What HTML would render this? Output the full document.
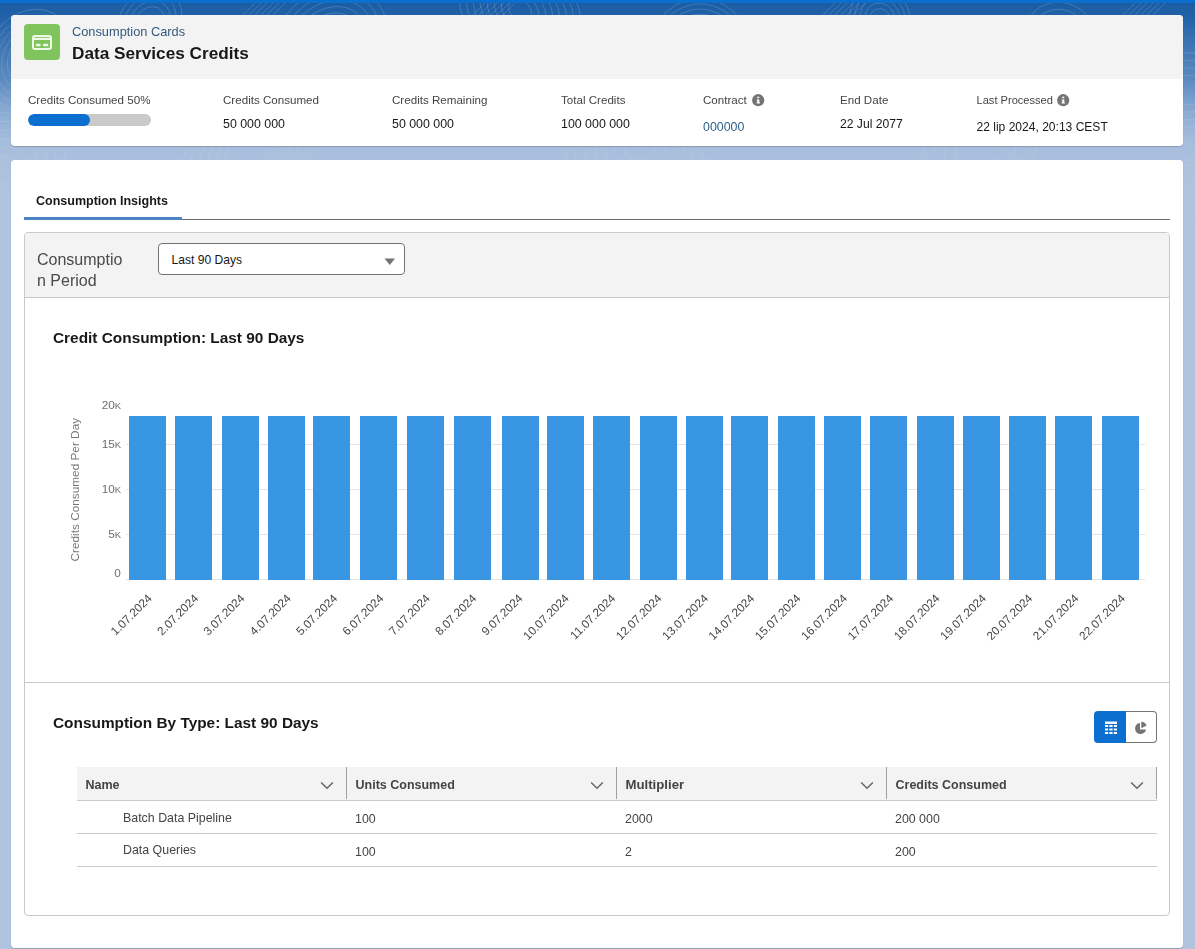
<!DOCTYPE html>
<html>
<head>
<meta charset="utf-8">
<style>
html,body{margin:0;padding:0;}
body{width:1195px;height:949px;overflow:hidden;position:relative;font-family:"Liberation Sans",sans-serif;
background:linear-gradient(180deg,#0b6fd0 0px,#0b6fd0 3px,#1c5ca3 3px,#2363a9 20px,#3a72b0 40px,#4a7eb8 60px,#5c8ac0 80px,#7a9fcc 100px,#93b1d6 120px,#a5bcdc 140px,#adc1de 165px,#b0c4df 200px,#b0c4df 949px);}
.abs{position:absolute;white-space:nowrap;line-height:1;}
.card{position:absolute;background:#fff;border-radius:4px;box-shadow:0 1px 1px rgba(0,0,0,.18);}
.lbl{font-size:11.6px;color:#444;}
.val{font-size:12.4px;color:#181818;}
.info{position:absolute;width:13px;height:13px;border-radius:50%;background:#747474;}
.info:before{content:"";position:absolute;left:5.5px;top:2.6px;width:2px;height:2px;background:#fff;border-radius:1px;}
.info:after{content:"";position:absolute;left:5.5px;top:5.5px;width:2px;height:5px;background:#fff;}
.th{position:absolute;top:767px;height:34px;background:#f3f3f3;border-bottom:1px solid #c9c9c9;box-sizing:border-box;}
.thtxt{font-size:12.5px;font-weight:700;color:#444;}
.td{font-size:12.4px;color:#444;}
</style>
</head>
<body>
<svg id="bgsvg" style="position:absolute;left:0;top:0" width="1195" height="949"><defs><linearGradient id="bgf" x1="0" y1="0" x2="0" y2="1"><stop offset="0" stop-color="#fff" stop-opacity="1"/><stop offset="0.5" stop-color="#fff" stop-opacity="0.6"/><stop offset="1" stop-color="#fff" stop-opacity="0"/></linearGradient><mask id="bgm"><rect x="0" y="3" width="1195" height="260" fill="url(#bgf)"/></mask></defs><g mask="url(#bgm)" fill="none" stroke="#ffffff" stroke-opacity="0.2" stroke-width="0.8"><ellipse cx="30" cy="60" rx="16.2" ry="19.4" transform="rotate(26 30 60)"/><ellipse cx="30" cy="60" rx="21.8" ry="26.0" transform="rotate(26 30 60)"/><ellipse cx="30" cy="60" rx="27.3" ry="32.5" transform="rotate(26 30 60)"/><ellipse cx="30" cy="60" rx="32.8" ry="39.1" transform="rotate(26 30 60)"/><ellipse cx="30" cy="60" rx="38.3" ry="45.7" transform="rotate(26 30 60)"/><ellipse cx="30" cy="60" rx="43.8" ry="52.3" transform="rotate(26 30 60)"/><ellipse cx="150" cy="20" rx="14.9" ry="12.4" transform="rotate(-37 150 20)"/><ellipse cx="150" cy="20" rx="21.2" ry="17.6" transform="rotate(-37 150 20)"/><ellipse cx="150" cy="20" rx="27.6" ry="22.9" transform="rotate(-37 150 20)"/><ellipse cx="150" cy="20" rx="33.9" ry="28.1" transform="rotate(-37 150 20)"/><ellipse cx="330" cy="40" rx="16.2" ry="13.0" transform="rotate(-35 330 40)"/><ellipse cx="330" cy="40" rx="23.6" ry="19.0" transform="rotate(-35 330 40)"/><ellipse cx="330" cy="40" rx="31.0" ry="24.9" transform="rotate(-35 330 40)"/><ellipse cx="330" cy="40" rx="38.3" ry="30.9" transform="rotate(-35 330 40)"/><ellipse cx="330" cy="40" rx="45.7" ry="36.9" transform="rotate(-35 330 40)"/><ellipse cx="330" cy="40" rx="53.1" ry="42.8" transform="rotate(-35 330 40)"/><ellipse cx="330" cy="40" rx="60.5" ry="48.8" transform="rotate(-35 330 40)"/><ellipse cx="520" cy="10" rx="12.3" ry="9.5" transform="rotate(36 520 10)"/><ellipse cx="520" cy="10" rx="20.0" ry="15.4" transform="rotate(36 520 10)"/><ellipse cx="520" cy="10" rx="27.7" ry="21.3" transform="rotate(36 520 10)"/><ellipse cx="520" cy="10" rx="35.4" ry="27.2" transform="rotate(36 520 10)"/><ellipse cx="520" cy="10" rx="43.0" ry="33.1" transform="rotate(36 520 10)"/><ellipse cx="520" cy="10" rx="50.7" ry="39.0" transform="rotate(36 520 10)"/><ellipse cx="520" cy="10" rx="58.4" ry="44.8" transform="rotate(36 520 10)"/><ellipse cx="520" cy="10" rx="66.1" ry="50.7" transform="rotate(36 520 10)"/><ellipse cx="700" cy="50" rx="14.7" ry="15.0" transform="rotate(5 700 50)"/><ellipse cx="700" cy="50" rx="19.8" ry="20.2" transform="rotate(5 700 50)"/><ellipse cx="700" cy="50" rx="24.8" ry="25.4" transform="rotate(5 700 50)"/><ellipse cx="700" cy="50" rx="29.9" ry="30.6" transform="rotate(5 700 50)"/><ellipse cx="700" cy="50" rx="35.0" ry="35.8" transform="rotate(5 700 50)"/><ellipse cx="700" cy="50" rx="40.1" ry="41.0" transform="rotate(5 700 50)"/><ellipse cx="700" cy="50" rx="45.1" ry="46.2" transform="rotate(5 700 50)"/><ellipse cx="700" cy="50" rx="50.2" ry="51.4" transform="rotate(5 700 50)"/><ellipse cx="880" cy="20" rx="10.3" ry="11.5" transform="rotate(-15 880 20)"/><ellipse cx="880" cy="20" rx="15.2" ry="17.1" transform="rotate(-15 880 20)"/><ellipse cx="880" cy="20" rx="20.2" ry="22.6" transform="rotate(-15 880 20)"/><ellipse cx="880" cy="20" rx="25.2" ry="28.2" transform="rotate(-15 880 20)"/><ellipse cx="880" cy="20" rx="30.2" ry="33.8" transform="rotate(-15 880 20)"/><ellipse cx="1060" cy="40" rx="8.8" ry="9.2" transform="rotate(-32 1060 40)"/><ellipse cx="1060" cy="40" rx="15.7" ry="16.5" transform="rotate(-32 1060 40)"/><ellipse cx="1060" cy="40" rx="22.6" ry="23.8" transform="rotate(-32 1060 40)"/><ellipse cx="1060" cy="40" rx="29.5" ry="31.1" transform="rotate(-32 1060 40)"/><ellipse cx="1060" cy="40" rx="36.5" ry="38.4" transform="rotate(-32 1060 40)"/><ellipse cx="1190" cy="90" rx="17.7" ry="14.8" transform="rotate(3 1190 90)"/><ellipse cx="1190" cy="90" rx="26.6" ry="22.2" transform="rotate(3 1190 90)"/><ellipse cx="1190" cy="90" rx="35.6" ry="29.7" transform="rotate(3 1190 90)"/><ellipse cx="1190" cy="90" rx="44.5" ry="37.2" transform="rotate(3 1190 90)"/><ellipse cx="5" cy="170" rx="14.8" ry="13.6" transform="rotate(-20 5 170)"/><ellipse cx="5" cy="170" rx="24.3" ry="22.3" transform="rotate(-20 5 170)"/><ellipse cx="5" cy="170" rx="33.7" ry="31.0" transform="rotate(-20 5 170)"/><ellipse cx="5" cy="170" rx="43.2" ry="39.7" transform="rotate(-20 5 170)"/><ellipse cx="5" cy="170" rx="52.7" ry="48.4" transform="rotate(-20 5 170)"/><ellipse cx="5" cy="170" rx="62.1" ry="57.1" transform="rotate(-20 5 170)"/><ellipse cx="1195" cy="200" rx="20.6" ry="16.4" transform="rotate(2 1195 200)"/><ellipse cx="1195" cy="200" rx="28.2" ry="22.4" transform="rotate(2 1195 200)"/><ellipse cx="1195" cy="200" rx="35.7" ry="28.3" transform="rotate(2 1195 200)"/><ellipse cx="1195" cy="200" rx="43.2" ry="34.3" transform="rotate(2 1195 200)"/><ellipse cx="1195" cy="200" rx="50.8" ry="40.3" transform="rotate(2 1195 200)"/><ellipse cx="250" cy="150" rx="26.5" ry="16.8" transform="rotate(-31 250 150)"/><ellipse cx="250" cy="150" rx="36.3" ry="22.9" transform="rotate(-31 250 150)"/><ellipse cx="250" cy="150" rx="46.0" ry="29.1" transform="rotate(-31 250 150)"/><ellipse cx="250" cy="150" rx="55.8" ry="35.2" transform="rotate(-31 250 150)"/><ellipse cx="250" cy="150" rx="65.5" ry="41.4" transform="rotate(-31 250 150)"/><ellipse cx="250" cy="150" rx="75.3" ry="47.5" transform="rotate(-31 250 150)"/><ellipse cx="640" cy="150" rx="15.4" ry="10.0" transform="rotate(-6 640 150)"/><ellipse cx="640" cy="150" rx="25.3" ry="16.3" transform="rotate(-6 640 150)"/><ellipse cx="640" cy="150" rx="35.1" ry="22.7" transform="rotate(-6 640 150)"/><ellipse cx="640" cy="150" rx="45.0" ry="29.1" transform="rotate(-6 640 150)"/><ellipse cx="640" cy="150" rx="54.8" ry="35.5" transform="rotate(-6 640 150)"/><ellipse cx="640" cy="150" rx="64.7" ry="41.8" transform="rotate(-6 640 150)"/><ellipse cx="640" cy="150" rx="74.5" ry="48.2" transform="rotate(-6 640 150)"/><ellipse cx="980" cy="150" rx="25.8" ry="17.2" transform="rotate(-15 980 150)"/><ellipse cx="980" cy="150" rx="36.7" ry="24.5" transform="rotate(-15 980 150)"/><ellipse cx="980" cy="150" rx="47.7" ry="31.8" transform="rotate(-15 980 150)"/><ellipse cx="980" cy="150" rx="58.6" ry="39.1" transform="rotate(-15 980 150)"/><path d="M240 18 L258 0"/><path d="M246 18 L264 0"/><path d="M252 18 L270 0"/><path d="M258 18 L276 0"/><path d="M264 18 L282 0"/><path d="M270 18 L288 0"/><path d="M470 18 L488 0"/><path d="M476 18 L494 0"/><path d="M482 18 L500 0"/><path d="M488 18 L506 0"/><path d="M494 18 L512 0"/><path d="M500 18 L518 0"/><path d="M820 18 L838 0"/><path d="M826 18 L844 0"/><path d="M832 18 L850 0"/><path d="M838 18 L856 0"/><path d="M844 18 L862 0"/><path d="M850 18 L868 0"/><path d="M1120 18 L1138 0"/><path d="M1126 18 L1144 0"/><path d="M1132 18 L1150 0"/><path d="M1138 18 L1156 0"/><path d="M1144 18 L1162 0"/><path d="M1150 18 L1168 0"/></g></svg>
<!-- card 1 -->
<div class="card" style="left:11px;top:15px;width:1172px;height:131px;overflow:hidden;">
  <div style="position:absolute;left:0;top:0;width:1172px;height:64px;background:#f3f3f3;"></div>
</div>
<div style="position:absolute;left:24px;top:24px;width:36px;height:36px;border-radius:4px;background:#80c45d;"></div>
<svg style="position:absolute;left:24px;top:24px" width="36" height="36" viewBox="0 0 36 36">
  <rect x="9" y="12" width="18" height="13" rx="2" ry="2" fill="none" stroke="#f1fae9" stroke-width="2"/>
  <rect x="9" y="13.8" width="18" height="2.2" fill="#f1fae9"/>
  <rect x="11.7" y="19.8" width="5" height="2.4" rx="1.2" fill="#f1fae9"/>
  <rect x="18.9" y="19.8" width="5.5" height="2.4" rx="1.2" fill="#f1fae9"/>
</svg>
<div class="abs" style="left:72px;top:26px;font-size:12.8px;color:#35597c;">Consumption Cards</div>
<div class="abs" style="left:72px;top:45.3px;font-size:17.2px;font-weight:700;color:#181818;">Data Services Credits</div>

<!-- metrics -->
<div class="abs lbl" style="left:28px;top:94.2px;">Credits Consumed 50%</div>
<div style="position:absolute;left:28px;top:114px;width:123px;height:12px;border-radius:6px;background:#c9c9c9;overflow:hidden;">
  <div style="position:absolute;left:0;top:0;width:62px;height:12px;border-radius:6px;background:#0b6fd0;"></div>
</div>
<div class="abs lbl" style="left:223px;top:94.2px;">Credits Consumed</div>
<div class="abs val" style="left:223px;top:117.5px;">50 000 000</div>
<div class="abs lbl" style="left:392px;top:94.2px;">Credits Remaining</div>
<div class="abs val" style="left:392px;top:117.5px;">50 000 000</div>
<div class="abs lbl" style="left:561px;top:94.2px;">Total Credits</div>
<div class="abs val" style="left:561px;top:117.5px;">100 000 000</div>
<div class="abs lbl" style="left:703px;top:94.2px;">Contract</div>
<svg style="position:absolute;left:751.8px;top:93.6px" width="13" height="13" viewBox="0 0 13 13"><circle cx="6.2" cy="6.2" r="6.1" fill="#747474"/><rect x="5.2" y="2.7" width="2.1" height="1.5" fill="#fff"/><path d="M4.6 5.5 H7.3 V8.6 H8 V9.5 H4.6 V8.6 H5.2 V6.3 H4.6 Z" fill="#fff"/></svg>
<div class="abs val" style="left:703px;top:120.5px;color:#31608c;">000000</div>
<div class="abs lbl" style="left:840px;top:94.2px;">End Date</div>
<div class="abs val" style="left:840px;top:117.7px;font-size:12.14px;">22 Jul 2077</div>
<div class="abs lbl" style="left:976.5px;top:94.6px;font-size:11.1px;">Last Processed</div>
<svg style="position:absolute;left:1057.2px;top:93.8px" width="13" height="13" viewBox="0 0 13 13"><circle cx="6.2" cy="6.2" r="6.1" fill="#747474"/><rect x="5.2" y="2.7" width="2.1" height="1.5" fill="#fff"/><path d="M4.6 5.5 H7.3 V8.6 H8 V9.5 H4.6 V8.6 H5.2 V6.3 H4.6 Z" fill="#fff"/></svg>
<div class="abs val" style="left:976.5px;top:120.8px;font-size:12.05px;">22 lip 2024, 20:13 CEST</div>

<!-- card 2 -->
<div class="card" style="left:11px;top:160px;width:1172px;height:788px;"></div>
<div class="abs" style="left:36px;top:194.8px;font-size:12.5px;font-weight:700;color:#181818;">Consumption Insights</div>
<div style="position:absolute;left:182px;top:219px;width:988px;height:1px;background:#6b6b6b;"></div>
<div style="position:absolute;left:24px;top:217px;width:158px;height:3px;background:#4a84c4;"></div>

<!-- inner box -->
<div style="position:absolute;left:24px;top:232px;width:1146px;height:684px;box-sizing:border-box;border:1px solid #c9c9c9;border-radius:4px;overflow:hidden;">
  <div style="position:absolute;left:0;top:0;width:1144px;height:64px;background:#f3f3f3;border-bottom:1px solid #c9c9c9;"></div>
  <div style="position:absolute;left:0;top:449px;width:1144px;height:1px;background:#c9c9c9;"></div>
</div>
<div class="abs" style="left:37px;font-size:16px;color:#4a4a4a;line-height:21px;top:248.7px;">Consumptio<br>n Period</div>
<div style="position:absolute;left:158px;top:243px;width:247px;height:32px;box-sizing:border-box;border:1px solid #747474;border-radius:4px;background:#fff;"></div>
<div class="abs" style="left:171.5px;top:253.8px;font-size:12.1px;color:#181818;">Last 90 Days</div>
<svg style="position:absolute;left:384px;top:257.5px" width="12" height="8"><path d="M0.5 0.5 L11 0.5 L5.75 7 Z" fill="#747474"/></svg>

<div class="abs" style="left:53px;top:330px;font-size:15.4px;font-weight:700;color:#181818;">Credit Consumption: Last 90 Days</div>

<!-- chart -->
<svg id="chart" style="position:absolute;left:0;top:0" width="1195" height="700" font-family="Liberation Sans, sans-serif"><defs><clipPath id="cp"><rect x="0" y="401" width="1195" height="300"/></clipPath></defs><line x1="126" y1="579.5" x2="1145" y2="579.5" stroke="#e5e5e5" stroke-width="1"/><line x1="126" y1="534.5" x2="1145" y2="534.5" stroke="#e5e5e5" stroke-width="1"/><line x1="126" y1="489.5" x2="1145" y2="489.5" stroke="#e5e5e5" stroke-width="1"/><line x1="126" y1="444.5" x2="1145" y2="444.5" stroke="#e5e5e5" stroke-width="1"/><rect x="129" y="416" width="37" height="164" fill="#3896e3"/><rect x="175" y="416" width="37" height="164" fill="#3896e3"/><rect x="222" y="416" width="37" height="164" fill="#3896e3"/><rect x="268" y="416" width="37" height="164" fill="#3896e3"/><rect x="313" y="416" width="37" height="164" fill="#3896e3"/><rect x="360" y="416" width="37" height="164" fill="#3896e3"/><rect x="407" y="416" width="37" height="164" fill="#3896e3"/><rect x="454" y="416" width="37" height="164" fill="#3896e3"/><rect x="502" y="416" width="37" height="164" fill="#3896e3"/><rect x="547" y="416" width="37" height="164" fill="#3896e3"/><rect x="593" y="416" width="37" height="164" fill="#3896e3"/><rect x="640" y="416" width="37" height="164" fill="#3896e3"/><rect x="686" y="416" width="37" height="164" fill="#3896e3"/><rect x="731" y="416" width="37" height="164" fill="#3896e3"/><rect x="778" y="416" width="37" height="164" fill="#3896e3"/><rect x="824" y="416" width="37" height="164" fill="#3896e3"/><rect x="870" y="416" width="37" height="164" fill="#3896e3"/><rect x="917" y="416" width="37" height="164" fill="#3896e3"/><rect x="963" y="416" width="37" height="164" fill="#3896e3"/><rect x="1009" y="416" width="37" height="164" fill="#3896e3"/><rect x="1055" y="416" width="37" height="164" fill="#3896e3"/><rect x="1102" y="416" width="37" height="164" fill="#3896e3"/><g clip-path="url(#cp)"><text x="120.8" y="576.7" text-anchor="end" font-size="11.8" fill="#6e6e6e">0</text><text x="121.2" y="537.7" text-anchor="end" font-size="11.8" fill="#6e6e6e">5<tspan font-size="9.5">K</tspan></text><text x="121.2" y="493.2" text-anchor="end" font-size="11.8" fill="#6e6e6e">10<tspan font-size="9.5">K</tspan></text><text x="121.2" y="447.7" text-anchor="end" font-size="11.8" fill="#6e6e6e">15<tspan font-size="9.5">K</tspan></text><text x="121.2" y="409.0" text-anchor="end" font-size="11.8" fill="#6e6e6e">20<tspan font-size="9.5">K</tspan></text></g><text transform="translate(78.9,489.7) rotate(-90)" text-anchor="middle" font-size="11.8" fill="#777">Credits Consumed Per Day</text><text transform="translate(152.70,599.0) rotate(-45)" text-anchor="end" font-size="11.8" fill="#444">1.07.2024</text><text transform="translate(199.04,599.0) rotate(-45)" text-anchor="end" font-size="11.8" fill="#444">2.07.2024</text><text transform="translate(245.38,599.0) rotate(-45)" text-anchor="end" font-size="11.8" fill="#444">3.07.2024</text><text transform="translate(291.72,599.0) rotate(-45)" text-anchor="end" font-size="11.8" fill="#444">4.07.2024</text><text transform="translate(338.06,599.0) rotate(-45)" text-anchor="end" font-size="11.8" fill="#444">5.07.2024</text><text transform="translate(384.40,599.0) rotate(-45)" text-anchor="end" font-size="11.8" fill="#444">6.07.2024</text><text transform="translate(430.74,599.0) rotate(-45)" text-anchor="end" font-size="11.8" fill="#444">7.07.2024</text><text transform="translate(477.08,599.0) rotate(-45)" text-anchor="end" font-size="11.8" fill="#444">8.07.2024</text><text transform="translate(523.42,599.0) rotate(-45)" text-anchor="end" font-size="11.8" fill="#444">9.07.2024</text><text transform="translate(569.76,599.0) rotate(-45)" text-anchor="end" font-size="11.8" fill="#444">10.07.2024</text><text transform="translate(616.10,599.0) rotate(-45)" text-anchor="end" font-size="11.8" fill="#444">11.07.2024</text><text transform="translate(662.44,599.0) rotate(-45)" text-anchor="end" font-size="11.8" fill="#444">12.07.2024</text><text transform="translate(708.78,599.0) rotate(-45)" text-anchor="end" font-size="11.8" fill="#444">13.07.2024</text><text transform="translate(755.12,599.0) rotate(-45)" text-anchor="end" font-size="11.8" fill="#444">14.07.2024</text><text transform="translate(801.46,599.0) rotate(-45)" text-anchor="end" font-size="11.8" fill="#444">15.07.2024</text><text transform="translate(847.80,599.0) rotate(-45)" text-anchor="end" font-size="11.8" fill="#444">16.07.2024</text><text transform="translate(894.14,599.0) rotate(-45)" text-anchor="end" font-size="11.8" fill="#444">17.07.2024</text><text transform="translate(940.48,599.0) rotate(-45)" text-anchor="end" font-size="11.8" fill="#444">18.07.2024</text><text transform="translate(986.82,599.0) rotate(-45)" text-anchor="end" font-size="11.8" fill="#444">19.07.2024</text><text transform="translate(1033.16,599.0) rotate(-45)" text-anchor="end" font-size="11.8" fill="#444">20.07.2024</text><text transform="translate(1079.50,599.0) rotate(-45)" text-anchor="end" font-size="11.8" fill="#444">21.07.2024</text><text transform="translate(1125.84,599.0) rotate(-45)" text-anchor="end" font-size="11.8" fill="#444">22.07.2024</text></svg>

<div class="abs" style="left:53px;top:714.8px;font-size:15.4px;font-weight:700;color:#181818;">Consumption By Type: Last 90 Days</div>

<!-- toggle -->
<div style="position:absolute;left:1094px;top:711px;width:32px;height:32px;background:#0b6fd0;border-radius:4px 0 0 4px;"></div>
<div style="position:absolute;left:1126px;top:711px;width:31px;height:32px;box-sizing:border-box;border:1px solid #747474;border-left:none;border-radius:0 4px 4px 0;background:#fff;"></div>
<svg style="position:absolute;left:1104px;top:721px" width="14" height="14" viewBox="0 0 14 14">
  <rect x="1" y="0.5" width="12" height="2.5" fill="#fff"/>
  <g fill="#fff">
    <rect x="1" y="4" width="3.2" height="2"/><rect x="5.4" y="4" width="3.2" height="2"/><rect x="9.8" y="4" width="3.2" height="2"/>
    <rect x="1" y="7.5" width="3.2" height="2"/><rect x="5.4" y="7.5" width="3.2" height="2"/><rect x="9.8" y="7.5" width="3.2" height="2"/>
    <rect x="1" y="11" width="3.2" height="2"/><rect x="5.4" y="11" width="3.2" height="2"/><rect x="9.8" y="11" width="3.2" height="2"/>
  </g>
</svg>
<svg style="position:absolute;left:1134px;top:721px" width="14" height="14" viewBox="0 0 14 14">
  <path d="M6 2 A5.5 5.5 0 1 0 12 8.6 L6 8.6 Z" fill="#747474"/>
  <path d="M7.3 0.8 L7.3 7.3 L12.6 4.6 A6 6 0 0 0 7.3 0.8 Z" fill="#747474"/>
</svg>

<!-- table -->
<div class="th" style="left:77px;width:270px;"></div>
<div class="th" style="left:347px;width:270px;"></div>
<div class="th" style="left:617px;width:270px;"></div>
<div class="th" style="left:887px;width:270px;"></div>
<div style="position:absolute;left:346px;top:767px;width:1px;height:32px;background:#a0a0a0;"></div>
<div style="position:absolute;left:616px;top:767px;width:1px;height:32px;background:#a0a0a0;"></div>
<div style="position:absolute;left:886px;top:767px;width:1px;height:32px;background:#a0a0a0;"></div>
<div style="position:absolute;left:1156px;top:767px;width:1px;height:32px;background:#a0a0a0;"></div>
<div class="abs thtxt" style="left:85.5px;top:778.8px;">Name</div>
<div class="abs thtxt" style="left:355.5px;top:778.8px;">Units Consumed</div>
<div class="abs thtxt" style="left:625.5px;top:777.9px;font-size:13.2px;">Multiplier</div>
<div class="abs thtxt" style="left:895.5px;top:778.8px;">Credits Consumed</div>
<svg style="position:absolute;left:320px;top:780.7px" width="14" height="10"><path d="M1.2 1.5 L7 7.3 L12.8 1.5" fill="none" stroke="#666" stroke-width="1.5"/></svg>
<svg style="position:absolute;left:590px;top:780.7px" width="14" height="10"><path d="M1.2 1.5 L7 7.3 L12.8 1.5" fill="none" stroke="#666" stroke-width="1.5"/></svg>
<svg style="position:absolute;left:860px;top:780.7px" width="14" height="10"><path d="M1.2 1.5 L7 7.3 L12.8 1.5" fill="none" stroke="#666" stroke-width="1.5"/></svg>
<svg style="position:absolute;left:1130px;top:780.7px" width="14" height="10"><path d="M1.2 1.5 L7 7.3 L12.8 1.5" fill="none" stroke="#666" stroke-width="1.5"/></svg>

<div style="position:absolute;left:77px;top:833px;width:1080px;height:1px;background:#c9c9c9;"></div>
<div style="position:absolute;left:77px;top:866px;width:1080px;height:1px;background:#c9c9c9;"></div>
<div class="abs td" style="left:123px;top:811.6px;">Batch Data Pipeline</div>
<div class="abs td" style="left:355px;top:812.8px;">100</div>
<div class="abs td" style="left:625px;top:812.8px;">2000</div>
<div class="abs td" style="left:895px;top:812.8px;">200 000</div>
<div class="abs td" style="left:123px;top:844.4px;">Data Queries</div>
<div class="abs td" style="left:355px;top:845.5px;">100</div>
<div class="abs td" style="left:625px;top:845.5px;">2</div>
<div class="abs td" style="left:895px;top:845.5px;">200</div>

</body>
</html>
